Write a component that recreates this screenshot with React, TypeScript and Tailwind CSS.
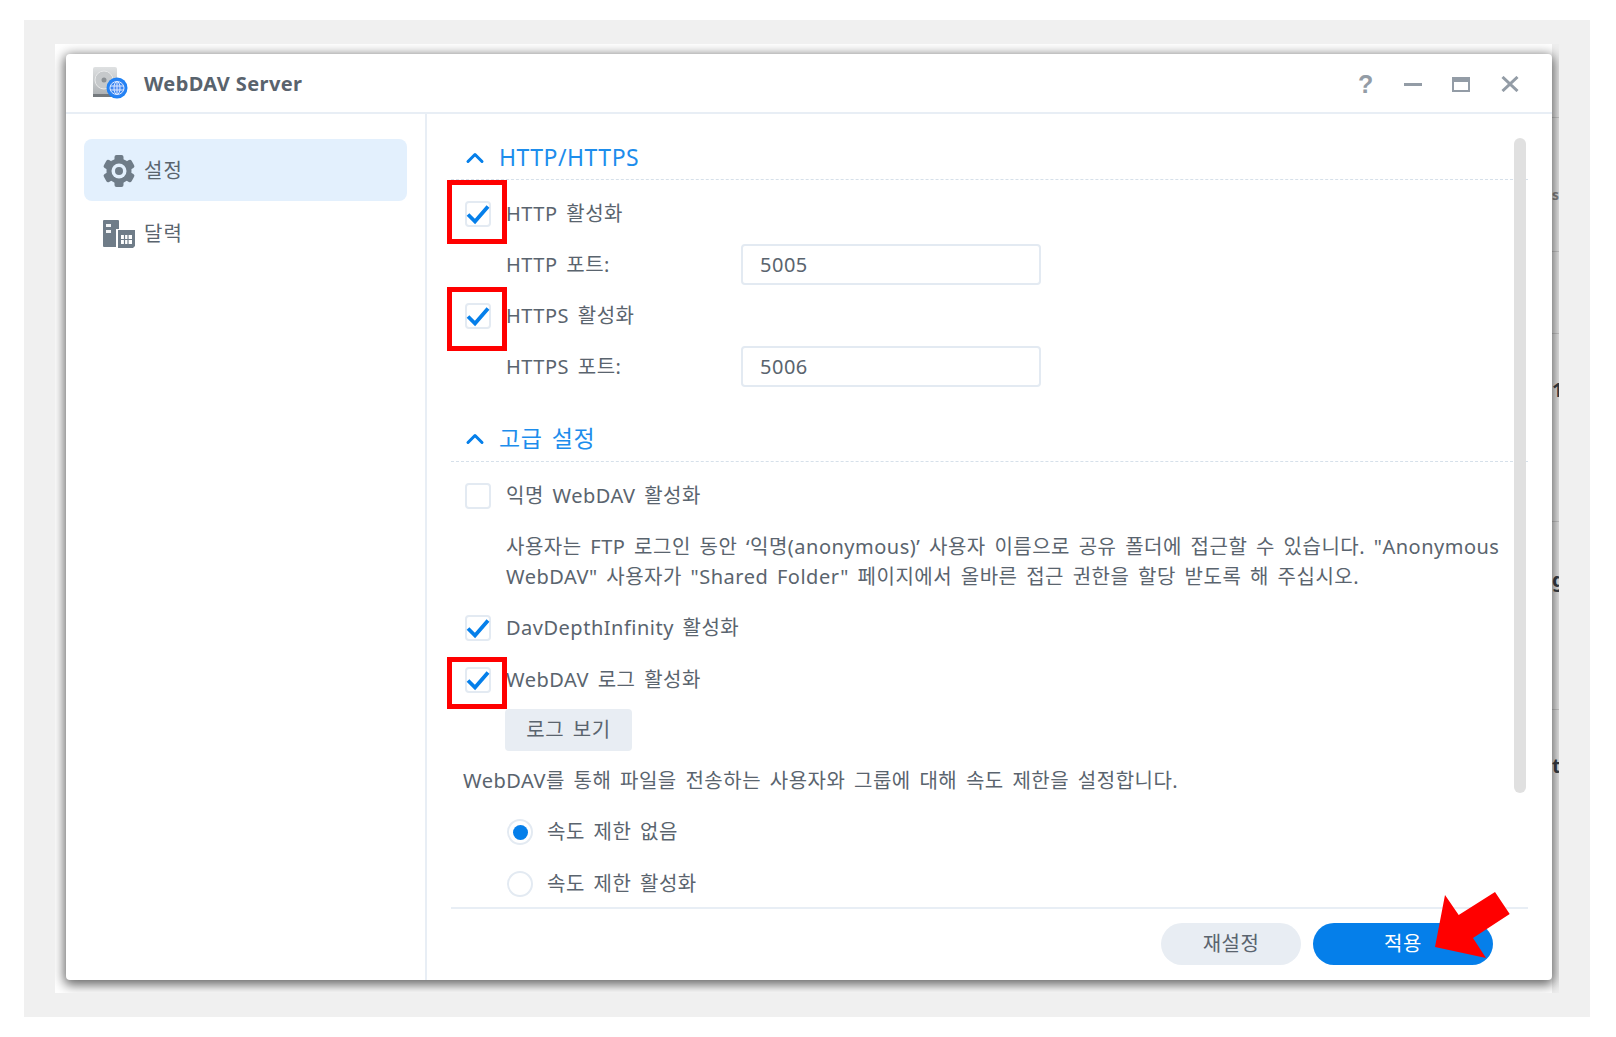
import type { ReactNode } from "react";
import { ChevronUp } from "lucide-react";

function RedBox({ className }: { className: string }) {
  return <div className={`absolute border-[5px] border-[#ff0000] ${className}`} />;
}

function Checkbox({ checked, children }: { checked?: boolean; children?: ReactNode }) {
  return (
    <div className="relative w-[26px] h-[26px] shrink-0 rounded-[4px] border-2 border-[#e3eaf2] bg-white flex items-center justify-center">
      {checked && (
        <svg width="24" height="22" viewBox="0 0 24 22" fill="none" className="absolute -left-[1px] top-[0px]">
          <path d="M2 11.5 L9 18.5 L22 3.5" stroke="#057fea" strokeWidth="3.8" />
        </svg>
      )}
      {children}
    </div>
  );
}

function CheckRow({ checked, label, className, children }: { checked?: boolean; label: string; className: string; children?: ReactNode }) {
  return (
    <div className={`flex items-center h-[26px] pl-[14px] gap-[15px] ${className}`}>
      <Checkbox checked={checked}>{children}</Checkbox>
      <span className="whitespace-nowrap">{label}</span>
    </div>
  );
}

function Radio({ selected, label, className }: { selected?: boolean; label: string; className: string }) {
  return (
    <div className={`flex items-center h-[26px] pl-[56px] gap-[14px] ${className}`}>
      <div className="w-[26px] h-[26px] rounded-full border-2 border-[#e3eaf2] bg-white flex items-center justify-center">
        {selected && <div className="w-[15px] h-[15px] rounded-full bg-[#057fea]" />}
      </div>
      <span className="whitespace-nowrap">{label}</span>
    </div>
  );
}

function PortRow({ label, value, className }: { label: string; value: string; className: string }) {
  return (
    <div className={`flex items-center h-[41px] pl-[55px] ${className}`}>
      <span className="w-[235px] whitespace-nowrap">{label}</span>
      <div className="w-[300px] h-[41px] rounded-[4px] border-2 border-[#e3eaf2] flex items-center pl-[17px]">{value}</div>
    </div>
  );
}

function SectionHeader({ title, className }: { title: string; className: string }) {
  return (
    <div className={`h-[46px] flex items-center pl-[10px] gap-[10px] border-b border-dashed border-[#d6e0ea] text-[#1d8dec] text-[23px] ${className}`}>
      <ChevronUp size={28} strokeWidth={2.6} className="text-[#057fea]" />
      <span>{title}</span>
    </div>
  );
}

function GearIcon() {
  return (
    <svg width="34" height="34" viewBox="0 0 34 34">
      <g fill="#6f7c88">
        <circle cx="17" cy="17" r="12.5" />
        <rect x="12.5" y="1" width="9" height="32" rx="2" />
        <rect x="12.5" y="1" width="9" height="32" rx="2" transform="rotate(60 17 17)" />
        <rect x="12.5" y="1" width="9" height="32" rx="2" transform="rotate(120 17 17)" />
      </g>
      <circle cx="17" cy="17" r="7.5" fill="#e3f0fd" />
      <circle cx="17" cy="17" r="4" fill="#6f7c88" />
    </svg>
  );
}

function CalendarIcon() {
  return (
    <svg width="32" height="28" viewBox="0 0 32 28">
      <rect x="0" y="0" width="16" height="27" rx="1" fill="#6f7c88" />
      <rect x="3" y="4" width="5" height="3" fill="#f2f4f6" />
      <rect x="3" y="10" width="5" height="3" fill="#f2f4f6" />
      <rect x="13" y="9" width="19" height="19" fill="#ffffff" />
      <path d="M15 10 H32 V26 L30 28 H15 Z" fill="#6f7c88" />
      <rect x="18" y="15" width="11" height="9" fill="#ffffff" />
      <path d="M18 19.5 H29 M21.5 15 V24 M25 15 V24" stroke="#6f7c88" strokeWidth="1.2" />
    </svg>
  );
}

function AppIcon() {
  return (
    <svg width="36" height="34" viewBox="0 0 36 34">
      <defs>
        <linearGradient id="disk" x1="0" y1="0" x2="0" y2="1">
          <stop offset="0" stopColor="#dfe1e2" />
          <stop offset="1" stopColor="#a9adb0" />
        </linearGradient>
        <radialGradient id="globe" cx="0.5" cy="0.5" r="0.6">
          <stop offset="0" stopColor="#5b8df0" />
          <stop offset="1" stopColor="#0d7df5" />
        </radialGradient>
      </defs>
      <rect x="1" y="1" width="24" height="30" rx="2" fill="url(#disk)" />
      <rect x="1" y="28" width="24" height="3" fill="#74797d" />
      <circle cx="12" cy="14" r="9" fill="#c6c9cb" stroke="#e8e9ea" />
      <circle cx="12" cy="14" r="2.5" fill="#8b9094" />
      <circle cx="25" cy="22" r="10.5" fill="url(#globe)" />
      <g stroke="#dce8ff" strokeWidth="1" fill="none">
        <ellipse cx="25" cy="22" rx="7" ry="6.5" />
        <ellipse cx="25" cy="22" rx="3" ry="6.5" />
        <path d="M18 20 H32 M18 24 H32 M25 15.5 V28.5" />
      </g>
    </svg>
  );
}

function WindowControls() {
  return (
    <div className="flex items-center text-[#939ca6] translate-y-[1px]">
      <span className="w-[20px] text-center text-[25px] font-bold font-['Liberation_Sans',sans-serif] leading-none">?</span>
      <div className="ml-[28px] w-[18px] h-[3px] bg-[#939ca6]" />
      <div className="ml-[30px] w-[18px] h-[15px] border-2 border-t-[5px] border-[#939ca6]" />
      <svg width="18" height="16" viewBox="0 0 18 16" className="ml-[31px]">
        <path d="M1.5 1 L16.5 15 M16.5 1 L1.5 15" stroke="#939ca6" strokeWidth="3" />
      </svg>
    </div>
  );
}

function BackdropStrip() {
  // a sliver of the page behind the window
  return (
    <div className="w-[7px] h-[949px] -mt-[10px] shrink-0 bg-[#eeeeee] flex flex-col overflow-hidden text-[#3a4048] text-[20px] font-bold leading-none">
      <div className="h-[74px] border-b border-[#cfcfcf]" />
      <div className="h-[134px] border-b border-[#cfcfcf] pt-[70px] text-[#8a8a8a] text-[14px]">s</div>
      <div className="h-[82px] border-b border-[#cfcfcf]" />
      <div className="h-[188px] border-b border-[#cfcfcf] pt-[46px]">1</div>
      <div className="h-[188px] border-b border-[#cfcfcf] pt-[48px]">g</div>
      <div className="pt-[46px]">t</div>
    </div>
  );
}

export default function App() {
  return (
    <div className="w-[1616px] h-[1037px] bg-white pt-[20px] pl-[24px] overflow-hidden font-['Noto_Sans','Noto_Sans_CJK_KR',sans-serif] text-[20px] tracking-[0.5px] [word-spacing:3px] text-[#5a646e]">
      <div className="w-[1566px] h-[997px] bg-[#f0f0f0] pt-[24px] pl-[31px]">
        <div className="w-[1504px] h-[949px] bg-white overflow-hidden pt-[10px] pl-[11px] flex">
          <div className="relative z-10 w-[1486px] h-[926px] shrink-0 bg-white rounded-[4px] shadow-[0_3px_12px_2px_rgba(0,0,0,0.6)] flex flex-col">
            {/* title bar */}
            <div className="h-[60px] shrink-0 border-b-2 border-[#e8eef5] flex items-center pl-[26px] pr-[33px]">
              <AppIcon />
              <span className="ml-[16px] translate-y-[1px] text-[20px] font-bold text-[#59636d] tracking-[0.4px] [word-spacing:0px]">WebDAV Server</span>
              <div className="ml-auto">
                <WindowControls />
              </div>
            </div>

            <div className="flex flex-1 min-h-0">
              {/* sidebar */}
              <div className="w-[361px] shrink-0 border-r-2 border-[#e8eef5] pt-[25px] pl-[18px] pr-[18px] tracking-[1px]">
                <div className="h-[62px] pt-[2px] rounded-[8px] bg-[#e3f0fd] flex items-center pl-[18px] gap-[8px]">
                  <GearIcon />
                  <span>설정</span>
                </div>
                <div className="h-[62px] mt-[2px] flex items-center pl-[19px] gap-[9px]">
                  <CalendarIcon />
                  <span>달력</span>
                </div>
              </div>

              {/* content */}
              <div className="flex-1 min-w-0 flex flex-col px-[24px]">
                <div className="relative h-[793px] shrink-0">
                  <SectionHeader title="HTTP/HTTPS" className="mt-[20px] pt-[2px]" />
                  <CheckRow checked label="HTTP 활성화" className="mt-[21px]">
                    <RedBox className="-left-[20px] -top-[23px] w-[60px] h-[64px]" />
                  </CheckRow>
                  <PortRow label="HTTP 포트:" value="5005" className="mt-[17px]" />
                  <CheckRow checked label="HTTPS 활성화" className="mt-[18px]">
                    <RedBox className="-left-[20px] -top-[18px] w-[60px] h-[64px]" />
                  </CheckRow>
                  <PortRow label="HTTPS 포트:" value="5006" className="mt-[17px]" />

                  <SectionHeader title="고급 설정" className="mt-[29px]" />
                  <CheckRow label="익명 WebDAV 활성화" className="mt-[21px]" />
                  <p className="mt-[23px] pl-[55px] leading-[30px] whitespace-nowrap">
                    사용자는 FTP 로그인 동안 ‘익명(anonymous)’ 사용자 이름으로 공유 폴더에 접근할 수 있습니다. "Anonymous
                    <br />
                    WebDAV" 사용자가 "Shared Folder" 페이지에서 올바른 접근 권한을 할당 받도록 해 주십시오.
                  </p>
                  <CheckRow checked label="DavDepthInfinity 활성화" className="mt-[23px]" />
                  <CheckRow checked label="WebDAV 로그 활성화" className="mt-[26px]">
                    <RedBox className="-left-[20px] -top-[12px] w-[60px] h-[52px]" />
                  </CheckRow>
                  <div className="mt-[16px] ml-[54px] w-[127px] h-[42px] rounded-[4px] bg-[#e8edf3] flex items-center justify-center">로그 보기</div>
                  <p className="mt-[15px] pl-[12px] leading-[30px] whitespace-nowrap">
                    WebDAV를 통해 파일을 전송하는 사용자와 그룹에 대해 속도 제한을 설정합니다.
                  </p>
                  <Radio selected label="속도 제한 없음" className="mt-[23px]" />
                  <Radio label="속도 제한 활성화" className="mt-[26px]" />

                  <div className="absolute left-[1063px] top-[24px] w-[12px] h-[655px] rounded-full bg-[#e0e0e0]" />
                </div>

                {/* footer */}
                <div className="flex-1 border-t-2 border-[#e8eef5] flex justify-end pt-[14px] pr-[35px] gap-[12px]">
                  <div className="w-[140px] h-[42px] rounded-full bg-[#e8edf3] flex items-center justify-center">재설정</div>
                  <div className="relative w-[180px] h-[42px] rounded-full bg-[#057fea] text-white flex items-center justify-center">
                    적용
                    <svg width="80" height="70" viewBox="0 0 80 70" className="absolute left-[117px] -top-[34px]">
                      <polygon points="15,6 28.7,26 65,3 79.7,25 43,49 56,69 5,58" fill="#ff0000" />
                    </svg>
                  </div>
                </div>
              </div>
            </div>
          </div>
          <BackdropStrip />
        </div>
      </div>
    </div>
  );
}
